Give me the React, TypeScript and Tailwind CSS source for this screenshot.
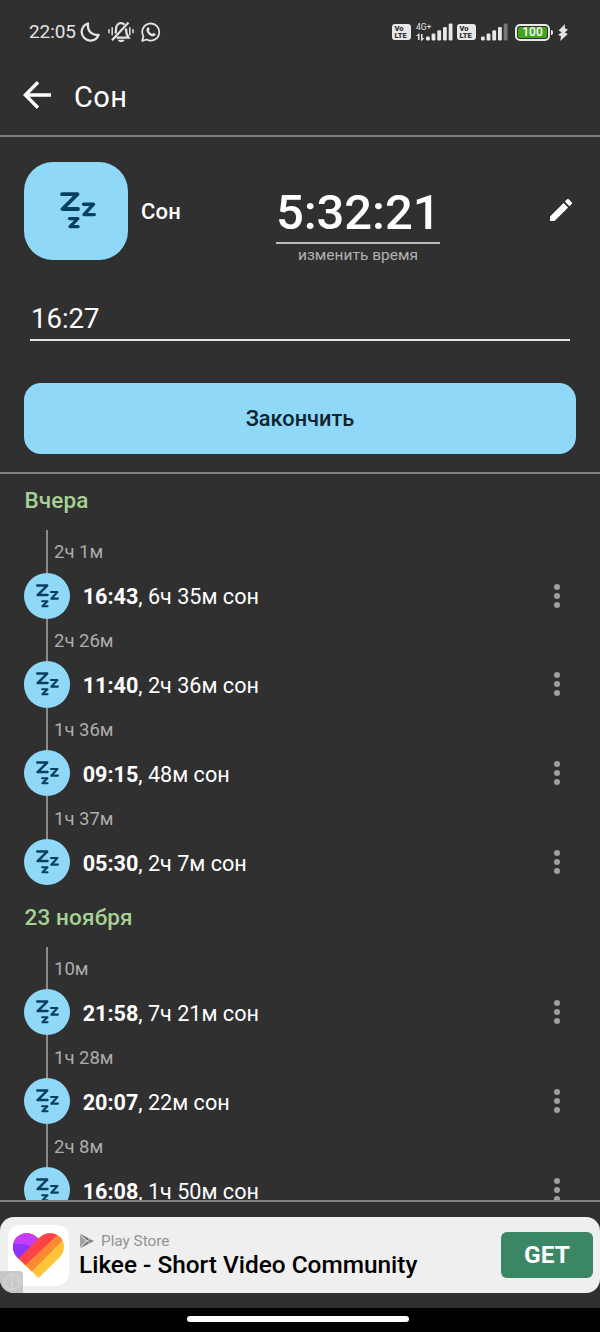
import type { ReactNode } from "react";

const groups = [
  {
    title: "Вчера",
    items: [
      { gap: "2ч 1м", time: "16:43", duration: "6ч 35м" },
      { gap: "2ч 26м", time: "11:40", duration: "2ч 36м" },
      { gap: "1ч 36м", time: "09:15", duration: "48м" },
      { gap: "1ч 37м", time: "05:30", duration: "2ч 7м" },
    ],
  },
  {
    title: "23 ноября",
    items: [
      { gap: "10м", time: "21:58", duration: "7ч 21м" },
      { gap: "1ч 28м", time: "20:07", duration: "22м" },
      { gap: "2ч 8м", time: "16:08", duration: "1ч 50м" },
    ],
  },
];

function SleepIcon({ className }: { className?: string }) {
  return (
    <svg
      viewBox="0 0 36 37"
      fill="none"
      stroke="#07405f"
      strokeLinecap="round"
      strokeLinejoin="round"
      className={className}
    >
      <path d="M2 2.2h15.5L2.500 17H18" strokeWidth="3.8" />
      <path d="M23.5 12.2h10L24 22.6h10.300" strokeWidth="3.4" />
      <path d="M9.5 26.6h8.4L10 34.6h8.100" strokeWidth="3.2" />
    </svg>
  );
}

function VolteBadge() {
  return (
    <div className="flex h-4 w-[19px] flex-col justify-center rounded-[3px] bg-[#e8e8e8] pl-[2.5px] text-[7.500px] leading-[7px] font-black text-[#303030]">
      <span>Vo</span>
      <span>LTE</span>
    </div>
  );
}

function Signal({ dimLast = false }: { dimLast?: boolean }) {
  return (
    <svg width="27" height="18" viewBox="0 0 27 18" fill="#e8e8e8">
      <rect x="0" y="13.5" width="3.8" height="4" rx="1.2" />
      <rect x="5.6" y="10.5" width="3.8" height="7" rx="1.2" />
      <rect x="11.3" y="7.3" width="3.8" height="10.2" rx="1.2" />
      <rect x="17" y="4" width="3.8" height="13.5" rx="1.2" />
      <rect x="22.7" y="0.5" width="3.8" height="17" rx="1.2" fill={dimLast ? "#777777" : "#e8e8e8"} />
    </svg>
  );
}

function StatusBar() {
  return (
    <div className="flex h-16 shrink-0 items-center pl-[29px] text-[#e4e4e4]">
      <span className="w-[51px] text-[19px] tracking-[-0.1px]">22:05</span>
      <svg width="20" height="20" viewBox="0 0 20 20" fill="none" stroke="currentColor" strokeWidth="2.300" strokeLinejoin="round">
        <path d="M8 1.500A8.700 8.700 0 1 0 18.600 12.800C12.500 14 7 9.300 8 1.500Z" />
      </svg>
      <svg width="26" height="22" viewBox="0 0 26 22" fill="none" stroke="currentColor" className="ml-2">
        <path d="M1 8.200v4M4.200 6.200v8M21.800 6.200v8M25 8.200v4" strokeWidth="1.500" />
        <path d="M7.500 12.500c.4-1.200.5-2.400.5-3.900C8 4.900 10 2.200 13 2.200c1.500 0 2.700.6 3.500 1.500M18 7.500c0 4.800.6 6.500 2.600 9.100H8.500" strokeWidth="2.200" />
        <path d="M4 19.200 20.500 1.500" strokeWidth="2.200" />
        <path d="M9.700 18.800h7c-.6 1.500-1.800 2.300-3.500 2.300s-2.900-.8-3.500-2.300Z" fill="currentColor" stroke="none" />
      </svg>
      <svg width="20" height="20" viewBox="0 0 20 20" fill="none" stroke="currentColor" className="ml-[7px]">
        <path d="m1.200 18.800 1.200-4.500A8.500 8.500 0 1 1 5.700 17.500Z" strokeWidth="1.800" strokeLinejoin="round" />
        <path
          d="M6.200 5.800c.6-.7 1.500-.7 1.800 0l.6 1.500c.1.500-.8 1.200-.6 1.600.7 1.300 1.700 2.200 3.100 2.800.4.200 1-.9 1.500-.8l1.700.8c.5.300.2 1.500-.5 2-2.300 1.600-5.100-.2-6.700-2-1.500-1.700-2.500-4.300-.9-5.900Z"
          fill="currentColor"
          stroke="none"
        />
      </svg>

      <div className="ml-auto flex items-center pr-[32px]">
        <VolteBadge />
        <div className="ml-[5px] flex w-[10px] flex-col items-start">
          <span className="h-[9px] text-[8.500px] leading-[7px] whitespace-nowrap">4G+</span>
          <svg width="9" height="8" viewBox="0 0 9 8" fill="currentColor">
            <path d="M2 7V3H0L3.500 0v7ZM5 1h1.500v4H8.500L5.500 8H5Z" />
          </svg>
        </div>
        <div>
          <Signal />
        </div>
        <div className="ml-1">
          <VolteBadge />
        </div>
        <div className="ml-[5px]">
          <Signal dimLast />
        </div>
        <div className="ml-[7px] flex h-[17px] w-[35px] items-center justify-center rounded-[5px] border-2 border-[#e8e8e8] p-px">
          <div className="flex h-full w-full items-center justify-center rounded-[2px] bg-[#43a51b] text-[12px] leading-none font-medium text-white">
            100
          </div>
        </div>
        <div className="ml-px h-[5px] w-[2px] rounded-r-sm bg-[#e8e8e8]" />
        <svg width="10" height="17" viewBox="0 0 10 17" fill="currentColor" className="ml-[5px]">
          <path d="M7 0 .5 6.500l3.200 1.700L0 11l3 1.200L2.200 17l7.600-6.900-3-1.700L10 5.500 6.800 4.200Z" />
        </svg>
      </div>
    </div>
  );
}

function Header() {
  return (
    <header className="flex h-[73px] shrink-0 items-center border-b-2 border-[#7f7f7f] pb-[9px] pl-[23px]">
      <svg width="28" height="28" viewBox="0 0 28 28" fill="none" stroke="white" strokeWidth="3.400">
        <path d="M28 14H2.500M15 1.200 2.300 14 15 26.800" />
      </svg>
      <h1 className="mt-[4px] ml-[23px] text-[29px] leading-none tracking-[0.4px]">Сон</h1>
    </header>
  );
}

function CurrentSleep() {
  return (
    <section className="flex h-[337px] shrink-0 flex-col border-b-2 border-[#7f7f7f] px-6 pt-[25px]">
      <div className="flex h-[98px] items-center">
        <div className="flex h-[98px] w-[104px] items-center justify-center rounded-[29px] bg-[#8fd8f8]">
          <SleepIcon className="mr-[-4px] mb-[2px] h-[37px] w-9" />
        </div>
        <span className="ml-[13px] w-[135px] text-[22px] font-medium tracking-[0.2px]">Сон</span>
        <div className="mt-[25px] flex w-[164px] flex-col items-center">
          <div className="h-[61px] w-full border-b-2 border-[#bdbdbd] pr-[2px] text-center text-[49px] leading-[59px] font-medium tracking-[-0.1px]">
            5:32:21
          </div>
          <div className="mt-px text-[15.500px] leading-5 text-[#b0b0b0]">изменить время</div>
        </div>
        <svg width="22" height="22" viewBox="3 3 18 18" fill="white" className="mr-1 mb-[2px] ml-auto">
          <path d="M3 17.250V21h3.750L17.810 9.940l-3.750-3.750L3 17.250ZM20.710 7.040a1 1 0 0 0 0-1.410l-2.340-2.340a1 1 0 0 0-1.410 0l-1.830 1.830 3.750 3.750 1.830-1.830Z" />
        </svg>
      </div>
      <div className="mx-[6px] mt-[37px] h-[44px] border-b-2 border-[#e4e4e4] pl-px text-[27.500px] leading-[44px]">
        16:27
      </div>
      <button className="mt-[42px] h-[71px] w-full rounded-[17px] bg-[#8fd8f8] pt-[2px] text-[21.800px] font-medium text-[#10242f]">
        Закончить
      </button>
    </section>
  );
}

function Gap({ children }: { children: ReactNode }) {
  return (
    <div className="ml-[22px] flex h-[42.600px] items-center border-l-2 border-[#8b8b8b] pt-1 pl-[6px] text-[18.500px] text-[#adadad]">
      {children}
    </div>
  );
}

function Entry({ time, duration }: { time: string; duration: string }) {
  return (
    <div className="flex h-[46.200px] items-center">
      <div className="flex h-[46.200px] w-[46.200px] items-center justify-center rounded-full bg-[#8fd8f8]">
        <SleepIcon className="mr-[-1px] h-[24px] w-[23px]" />
      </div>
      <div className="mt-[3px] ml-[12.500px] text-[21.600px] leading-none">
        <span className="font-bold">{time}</span>, {duration} сон
      </div>
      <div className="mr-4 ml-auto flex flex-col gap-[3px]">
        <span className="h-[6px] w-[6px] rounded-full bg-[#a0a0a0]" />
        <span className="h-[6px] w-[6px] rounded-full bg-[#a0a0a0]" />
        <span className="h-[6px] w-[6px] rounded-full bg-[#a0a0a0]" />
      </div>
    </div>
  );
}

function History() {
  return (
    <section className="flex h-[728px] shrink-0 flex-col gap-[5.500px] overflow-hidden border-b-2 border-[#7f7f7f] px-6">
      {groups.map((group) => (
        <div key={group.title} className="shrink-0">
          <h2 className="h-14 pl-[0.500px] text-[22.500px] leading-[53px] font-medium tracking-[0.15px] text-[#a5d294]">
            {group.title}
          </h2>
          {group.items.map((item) => (
            <div key={item.time}>
              <Gap>{item.gap}</Gap>
              <Entry time={item.time} duration={item.duration} />
            </div>
          ))}
        </div>
      ))}
    </section>
  );
}

function AdBanner() {
  return (
    <div className="relative mt-[15px] flex h-[76px] shrink-0 items-center overflow-hidden rounded-[14px] bg-[#efefef]">
      <div className="ml-2 flex h-[61px] w-[61px] items-center justify-center rounded-[12px] bg-white">
        <svg width="51" height="45" viewBox="0 0 51 45">
          <defs>
            <clipPath id="heart">
              <path d="M25.500 45 4.500 24.500C-1.500 18.500-1.300 9 4 4c5.700-5.300 14.500-5.300 21.500 1.500C32.500-1.300 41.300-1.300 47 4c5.300 5 5.500 14.500-.5 20.500Z" />
            </clipPath>
          </defs>
          <g clipPath="url(#heart)">
            <rect width="51" height="45" fill="#ffc538" />
            <path d="M0 0h51v6L19 38.500 0 45Z" fill="#fd8a33" />
            <path d="M0 0h46.500L12.500 32 0 45Z" fill="#fe4248" />
            <path d="M0 0h20l5.500 5.500L6 25 0 31Z" fill="#c43dfa" />
            <path d="M0 11h8l10 2L6 25 0 31Z" fill="#8c34fb" />
          </g>
        </svg>
      </div>
      <div className="ml-[11px] flex flex-col">
        <div className="flex items-center text-[15.300px] leading-5 text-[#939393]">
          <svg width="14" height="16" viewBox="0 0 14 16" className="mr-[7px]">
            <path d="M0 .5 9.500 5.700 7 7.700Z" fill="#777777" />
            <path d="M0 1.500 6.200 8 0 14.500Z" fill="#a4a4a4" />
            <path d="M0 15.500 7 8.300l2.500 2Z" fill="#777777" />
            <path d="M10 6 14 8l-4 2.200L7.700 8Z" fill="#858585" />
          </svg>
          Play Store
        </div>
        <div className="ml-[-1px] text-[24.400px] leading-7 font-medium text-black">Likee - Short Video Community</div>
      </div>
      <button className="mr-[7px] ml-auto h-[46px] w-[92px] rounded-[6px] bg-[#3b8664] text-[24.500px] font-bold text-white">
        GET
      </button>
      <div className="absolute bottom-0 left-0 flex h-[22px] w-[23px] items-center justify-center rounded-tr bg-[#bdbdbd]/80">
        <svg width="18" height="18" viewBox="0 0 18 18" fill="none" stroke="#d2d2d2" strokeWidth="2">
          <circle cx="9" cy="9" r="7.500" />
          <path d="M9 4v2.500M9 8v6" strokeWidth="2.500" />
        </svg>
      </div>
    </div>
  );
}

export default function App() {
  return (
    <div className="flex h-[1332px] w-[600px] flex-col overflow-hidden bg-[#303030] font-['Roboto',sans-serif] text-white">
      <StatusBar />
      <Header />
      <CurrentSleep />
      <History />
      <AdBanner />
      <div className="mt-auto flex h-6 shrink-0 justify-center bg-black pt-2 pr-1">
        <div className="h-[6px] w-[222px] rounded-full bg-white" />
      </div>
    </div>
  );
}
